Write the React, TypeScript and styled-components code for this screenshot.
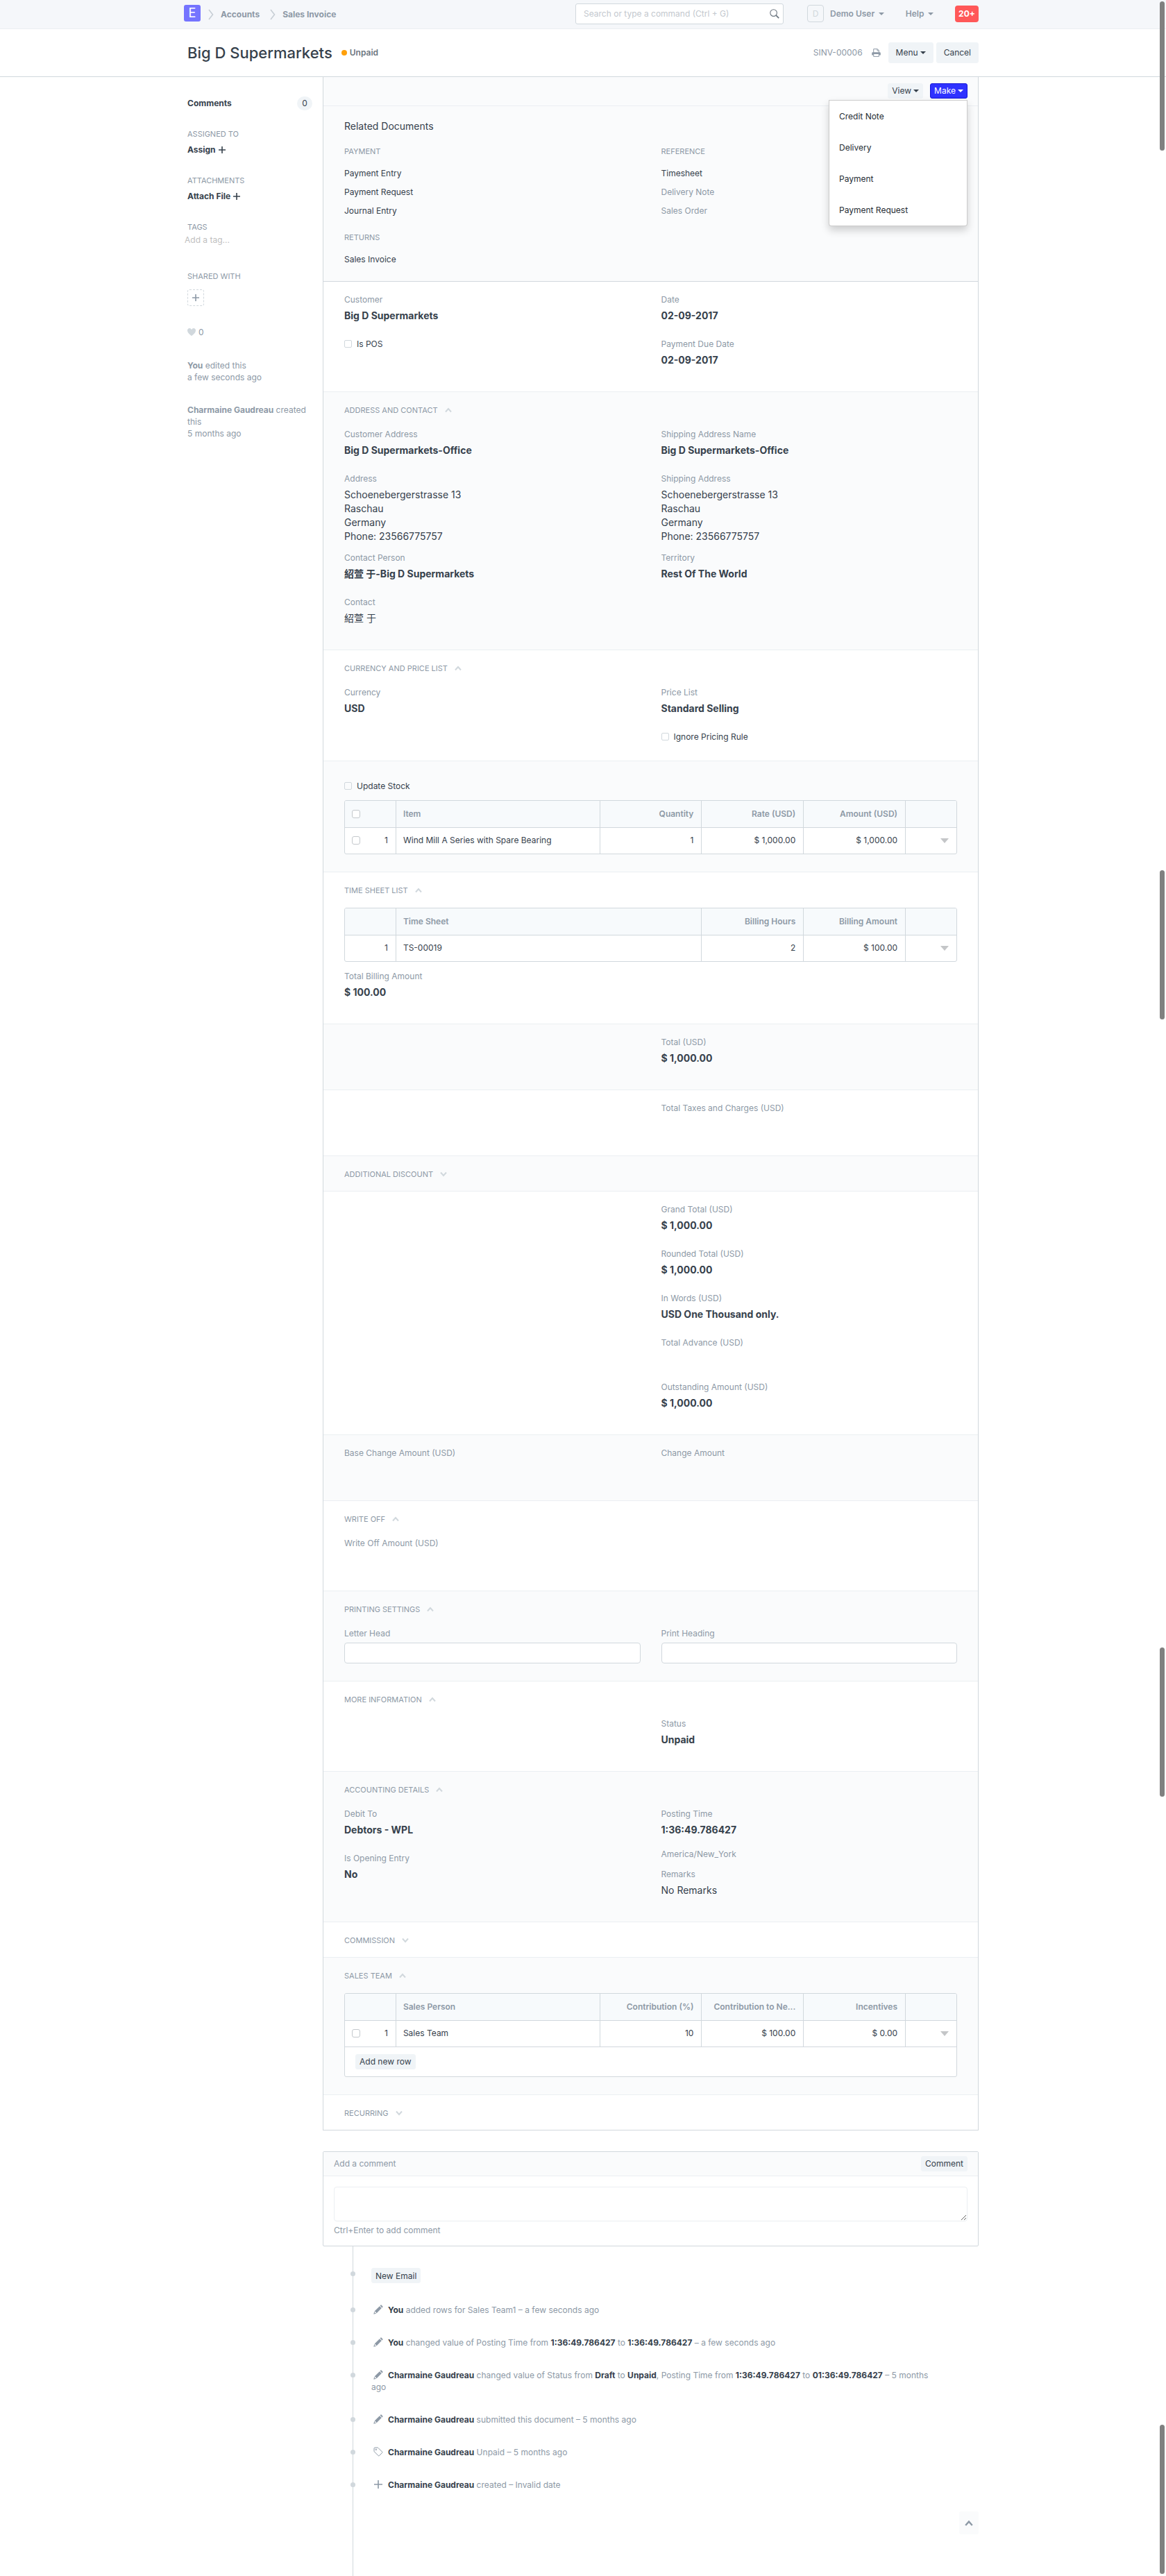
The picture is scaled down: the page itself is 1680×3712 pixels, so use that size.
import React from "react";
import styled, { createGlobalStyle, css } from "styled-components";

const c = {
  text: "#36414c",
  muted: "#8d99a6",
  border: "#d1d8dd",
  light: "#ebeff2",
  shade: "#fafbfc",
  nav: "#f5f7fa",
  head: "#f7fafc",
  btn: "#f0f4f7",
};

const Global = createGlobalStyle`
  *, *::before, *::after { box-sizing: border-box; }
  body {
    margin: 0;
    background: #fff;
    color: ${c.text};
    font: 400 12px/18px Inter, "Noto Sans CJK TC", "Liberation Sans", sans-serif;
  }
  button, input, textarea { font: inherit; color: inherit; }
  a { color: inherit; text-decoration: none; }
  b { font-weight: 700; }
  h1, h2, h3, p, ul, ol { margin: 0; padding: 0; font: inherit; list-style: none; }
`;

const Page = styled.div`
  position: relative;
  min-height: 100vh;
`;

const Container = styled.div`
  max-width: 1170px;
  margin: 0 auto;
  padding: 0 15px;
  display: flex;
  align-items: center;
`;

/* ---------- top bar ---------- */

const Navbar = styled.nav`
  background: ${c.nav};
  border-bottom: 1px solid ${c.light};
  ${Container} {
    height: 41px;
  }
`;

const Crumbs = styled.ol`
  display: flex;
  align-items: center;
  flex: 1;
  margin-left: -5px;
  color: ${c.muted};
  font-weight: 700;
  li {
    display: flex;
    align-items: center;
  }
  svg {
    margin: 0 10px 0 11px;
  }
  li:last-child svg {
    margin-left: 15px;
  }
`;

const Logo = styled.a`
  display: grid;
  place-items: center;
  width: 24px;
  height: 24px;
  margin-top: -3px;
  border-radius: 3px;
  background: #7574ff;
  color: #fff;
  font-size: 18px;
  font-weight: 400;
`;

const Search = styled.label`
  display: flex;
  align-items: center;
  width: 300px;
  height: 30px;
  margin-bottom: 1px;
  padding: 0 5px 0 11px;
  border: 1px solid ${c.border};
  border-radius: 3px;
  background: #fff;
  input {
    flex: 1;
    min-width: 0;
    padding: 0;
    border: 0;
    outline: 0;
    background: none;
  }
  input::placeholder {
    color: #c3c8ce;
    opacity: 1;
  }
`;

const NavTools = styled.div`
  display: flex;
  align-items: center;
  justify-content: space-between;
  width: 247px;
  margin-left: 34px;
  padding-bottom: 2px;
`;

const NavButton = styled.button`
  display: flex;
  align-items: center;
  gap: 6px;
  padding: 0;
  border: 0;
  background: none;
  color: ${c.muted};
  font-weight: 600;
`;

const Avatar = styled.span`
  display: grid;
  place-items: center;
  width: 24px;
  height: 25px;
  margin-right: 3px;
  border: 1px solid ${c.border};
  border-radius: 4px;
  color: ${c.border};
  font-weight: 400;
`;

const Count = styled.button`
  width: 34px;
  height: 24px;
  padding: 0;
  border: 0;
  border-radius: 4px;
  background: #ff5858;
  color: #fff;
  font-weight: 700;
`;

const Caret = styled.span`
  display: inline-block;
  border: 4px solid transparent;
  border-top-color: currentColor;
  border-bottom: 0;
`;

/* ---------- document header ---------- */

const DocHead = styled.header`
  border-bottom: 1px solid ${c.border};
  ${Container} {
    height: 68px;
    gap: 4px;
  }
`;

const Title = styled.h1`
  font-size: 22px;
  line-height: 30px;
  font-weight: 500;
`;

const Status = styled.span`
  display: flex;
  align-items: center;
  flex: 1;
  gap: 4px;
  margin-left: 9px;
  color: #6c7680;
  font-weight: 600;
  &::before {
    content: "";
    width: 8px;
    height: 8px;
    border-radius: 50%;
    background: #ffa00a;
  }
`;

const DocName = styled.span`
  margin-right: 9px;
  color: ${c.muted};
`;

const IconButton = styled.button`
  display: flex;
  margin-right: 7px;
  padding: 0;
  border: 0;
  background: none;
  color: ${c.muted};
`;

const Button = styled.button<{ $large?: boolean; $primary?: boolean }>`
  display: inline-flex;
  align-items: center;
  gap: 3px;
  height: ${(p) => (p.$large ? 30 : 22)}px;
  padding: 0 ${(p) => (p.$large ? 10 : 5)}px;
  border: 1px solid ${(p) => (p.$primary ? "#1516d8" : c.btn)};
  border-radius: 3px;
  background: ${(p) => (p.$primary ? "#2f32ff" : c.btn)};
  color: ${(p) => (p.$primary ? "#fff" : c.text)};
`;

/* ---------- body ---------- */

const Body = styled.div`
  max-width: 1170px;
  margin: 0 auto;
  padding: 0 15px;
  display: grid;
  grid-template-columns: 195px minmax(0, 1fr);
`;

const Sidebar = styled.aside`
  padding: 29px 15px 0 0;
`;

const SideGroup = styled.section`
  margin-bottom: 26px;
`;

const SideLabel = styled.h3`
  color: ${c.muted};
  font-size: 11px;
`;

const SideAction = styled.button`
  display: flex;
  align-items: center;
  gap: 4px;
  margin-top: 5px;
  padding: 0;
  border: 0;
  background: none;
  font-weight: 700;
`;

const Comments = styled.div`
  display: flex;
  align-items: center;
  justify-content: space-between;
  height: 18px;
  font-weight: 700;
  span {
    width: 22px;
    border-radius: 10px;
    background: ${c.btn};
    line-height: 20px;
    text-align: center;
    font-weight: 400;
  }
`;

const TagInput = styled.input`
  display: block;
  width: 100%;
  height: 18px;
  margin: 1px 0 34px -4px;
  padding: 0;
  border: 0;
  outline: 0;
  &::placeholder {
    color: #c0c0c0;
    opacity: 1;
  }
`;

const ShareButton = styled.button`
  display: grid;
  place-items: center;
  width: 24px;
  height: 24px;
  margin: 10px 0 29px;
  padding: 0;
  border: 1px dashed ${c.border};
  border-radius: 3px;
  background: none;
  color: ${c.muted};
`;

const Likes = styled.div`
  display: flex;
  align-items: center;
  gap: 4px;
  color: ${c.muted};
  svg {
    color: ${c.border};
  }
`;

const History = styled.p`
  margin: 30px 0 0;
  color: ${c.muted};
  line-height: 17px;
`;

const Panel = styled.div`
  border: 1px solid ${c.border};
  border-top: 0;
`;

const Toolbar = styled.div`
  display: flex;
  justify-content: flex-end;
  gap: 10px;
  height: 42px;
  padding: 9px 15px 0;
  border-bottom: 1px solid ${c.light};
  background: ${c.shade};
`;

const MenuAnchor = styled.div`
  position: relative;
`;

const Menu = styled.ul`
  position: absolute;
  z-index: 2;
  top: 24px;
  right: 0;
  width: 200px;
  border: 1px solid rgba(0, 0, 0, 0.2);
  border-radius: 0 0 4px 4px;
  background: #fff;
  box-shadow: 0 6px 12px rgba(0, 0, 0, 0.18);
  a {
    display: block;
    padding: 0 14px;
    line-height: 45px;
    color: #262d34;
  }
`;

const Related = styled.section`
  padding: 20px 30px 22px;
  border-bottom: 1px solid ${c.border};
  background: ${c.shade};
  h2 {
    font-size: 14px;
    margin-bottom: 18px;
  }
`;

const Columns = styled.div`
  display: grid;
  grid-template-columns: 1fr 1fr;
  gap: 30px;
`;

const Caps = styled.h3`
  color: ${c.muted};
  font-size: 11px;
  text-transform: uppercase;
`;

const Links = styled.ul`
  display: grid;
  gap: 9px;
  margin: 14px 0 20px;
  &:last-child {
    margin-bottom: 0;
  }
`;

const DocLink = styled.a<{ $muted?: boolean }>`
  color: ${(p) => (p.$muted ? c.muted : c.text)};
`;

const Section = styled.section<{ $shade?: boolean }>`
  padding: 17px 30px 13px;
  background: ${(p) => (p.$shade ? c.shade : "#fff")};
  & + & {
    border-top: 1px solid ${c.light};
  }
`;

const Toggle = styled.button<{ $space: number }>`
  display: flex;
  align-items: center;
  gap: 10px;
  height: 18px;
  margin: 0 0 ${(p) => p.$space}px;
  padding: 0;
  border: 0;
  background: none;
  color: ${c.muted};
  font-size: 11px;
  text-transform: uppercase;
  svg {
    color: ${c.border};
  }
`;

const FieldBox = styled.div`
  min-height: 64px;
`;

const FieldLabel = styled.label`
  display: block;
  color: ${c.muted};
`;

const Value = styled.div<{ $plain?: boolean }>`
  margin: 4px 0 12px;
  font-size: 14px;
  line-height: 20px;
  font-weight: ${(p) => (p.$plain ? 400 : 700)};
`;

const Note = styled.p`
  margin: 16px 0 11px;
  color: ${c.muted};
`;

const box = css`
  appearance: none;
  flex: none;
  margin: 0;
  border: 1px solid ${c.border};
  border-radius: 2px;
  background: #fff;
`;

const Check = styled.label`
  display: flex;
  align-items: center;
  gap: 7px;
  height: 18px;
  input {
    ${box}
    width: 11px;
    height: 11px;
    background: none;
    margin-bottom: 2px;
  }
`;

const StockCheck = styled(Check)`
  margin: 10px 0 11px;
`;

const PlainCheck = styled(Check)`
  margin-bottom: 12px;
`;

const TextInput = styled.input`
  display: block;
  width: 100%;
  height: 30px;
  margin: 4px 0 12px;
  padding: 0 10px;
  border: 1px solid ${c.border};
  border-radius: 4px;
  background: #fff;
`;

const GridBox = styled.div`
  margin-bottom: 12px;
  border: 1px solid ${c.border};
  border-radius: 3px;
  background: #fff;
  overflow: hidden;
`;

const Grid = styled.table`
  width: 100%;
  table-layout: fixed;
  border-collapse: collapse;
  th,
  td {
    height: 38px;
    padding: 0 11px 0 10px;
    border-right: 1px solid ${c.border};
    text-align: right;
    overflow: hidden;
    white-space: nowrap;
    text-overflow: ellipsis;
  }
  th {
    background: ${c.head};
    border-bottom: 1px solid ${c.border};
    color: ${c.muted};
    font-weight: 600;
  }
  th:nth-child(2),
  td:nth-child(2) {
    text-align: left;
  }
  th:last-child,
  td:last-child {
    border-right: 0;
  }
`;

const RowHead = styled.div`
  display: flex;
  align-items: center;
  justify-content: space-between;
  input {
    ${box}
    width: 12px;
    height: 12px;
    border-color: #c4c8cc;
    border-radius: 3px;
  }
  span {
    margin-left: auto;
  }
`;

const RowMenu = styled.button`
  padding: 0;
  border: 0;
  background: none;
  color: #c4c6c8;
  line-height: 0;
`;

const GridFoot = styled.div`
  padding: 10px 15px;
  border-top: 1px solid ${c.border};
`;

/* ---------- comments and activity ---------- */

const CommentBox = styled.section`
  margin-top: 30px;
  border: 1px solid ${c.border};
  border-radius: 2px;
`;

const CommentHead = styled.div`
  display: flex;
  align-items: center;
  justify-content: space-between;
  height: 35px;
  padding: 0 15px;
  border-bottom: 1px solid ${c.light};
  background: ${c.shade};
  color: ${c.muted};
`;

const CommentBody = styled.div`
  padding: 15px 15px 13px;
  color: ${c.muted};
  textarea {
    display: block;
    width: 100%;
    height: 50px;
    margin-bottom: 4px;
    padding: 8px 10px;
    border: 1px solid ${c.light};
    border-radius: 4px;
    resize: vertical;
  }
`;

const Timeline = styled.div`
  margin-left: 43px;
  padding: 31px 0 60px 26px;
  border-left: 1px solid ${c.border};
  color: ${c.muted};
  line-height: 17px;
`;

const Event = styled.div`
  position: relative;
  margin: 0 55px 30px 0;
  &::before {
    content: "";
    position: absolute;
    top: 5px;
    left: -30px;
    width: 7px;
    height: 7px;
    border-radius: 50%;
    background: ${c.border};
  }
  b {
    color: ${c.text};
  }
  svg {
    margin: 0 7px 0 3px;
    vertical-align: -2px;
  }
`;

const ToTop = styled.button`
  display: grid;
  place-items: center;
  width: 28px;
  height: 33px;
  margin: 0 0 0 auto;
  padding: 0;
  border: 0;
  border-radius: 3px;
  background: ${c.shade};
  color: ${c.muted};
`;

/* Scroll thumbs lie over the right edge of the page. */
const Thumbs = styled.div`
  position: absolute;
  top: 2px;
  right: 2px;
  width: 7px;
  display: grid;
  gap: 905px;
  pointer-events: none;
  i {
    height: 215px;
    border-radius: 4px;
    background: #808080;
  }
  i:first-child {
    margin-bottom: 132px;
  }
`;

/* ---------- icons ---------- */

const Crumb = () => (
  <svg width="8" height="16" viewBox="0 0 8 16" fill="none" stroke="#c7ced5" strokeWidth="1.6">
    <path d="M1 1l5.5 7L1 15" />
  </svg>
);

const Chevron = ({ down = false, size = 10, width = 2 }) => (
  <svg width={size} height={size} viewBox="0 0 10 10" fill="none" stroke="currentColor" strokeWidth={width}>
    <path d={down ? "M1 2.5l4 4.5 4-4.5" : "M1 7.5L5 3l4 4.5"} />
  </svg>
);

const SearchIcon = () => (
  <svg width="14" height="14" viewBox="0 0 14 14" fill="none" stroke="#6c7680" strokeWidth="1.1">
    <circle cx="5.6" cy="5.6" r="4.8" />
    <path d="M9.2 9.2l4 4" strokeWidth="1.8" />
  </svg>
);

const PrintIcon = () => (
  <svg width="13" height="12" viewBox="0 0 13 12" fill="none" stroke="currentColor">
    <path d="M2.7 6V.6h5.6l2 2V6M8 .8v2.2h2.2" />
    <path d="M.2 9.4V6.6Q.2 5.2 1.6 5.2h9.8q1.4 0 1.4 1.4v2.8h-2.3V8H2.5v1.4z" fill="currentColor" stroke="none" />
    <path d="M2.7 8v3.4h7.6V8" />
  </svg>
);

const Plus = ({ size = 10, width = 1.6 }) => (
  <svg width={size} height={size} viewBox="0 0 10 10" fill="none" stroke="currentColor" strokeWidth={width}>
    <path d="M5 0v10M0 5h10" />
  </svg>
);

const PlusThin = () => (
  <svg width="14" height="14" viewBox="0 0 14 14" fill="none" stroke="currentColor" strokeWidth="1.6">
    <path d="M7 1v12M1 7h12" />
  </svg>
);

const Heart = () => (
  <svg width="12" height="16" viewBox="0 0 12 16" fill="currentColor">
    <path d="M11.2 3c-.52-.63-1.25-.95-2.2-1-.97 0-1.69.42-2.2 1-.51.58-.78.92-.8 1-.02-.08-.28-.42-.8-1-.52-.58-1.17-1-2.2-1-.95.05-1.69.38-2.2 1-.52.61-.78 1.28-.8 2 0 .52.09 1.52.67 2.67C1.25 8.82 3.01 10.61 6 13c2.98-2.39 4.77-4.17 5.34-5.33C11.91 6.51 12 5.5 12 5c-.02-.72-.28-1.39-.8-2.02V3z" />
  </svg>
);

const Pencil = () => (
  <svg width="14" height="14" viewBox="0 0 14 14" fill="currentColor">
    <path d="M8.9 2.2L11.8 5.1 4.7 12.2 1.8 9.3Z" />
    <path d="M9.6 1.5L10.5 0.6Q11 0.1 11.5 0.6L13.4 2.5Q13.9 3 13.4 3.5L12.5 4.4Z" />
    <path d="M1.3 9.8L0.3 13.7L4.2 12.7L3.5 12L1.7 12.3L2 10.5Z" />
  </svg>
);

const Tag = () => (
  <svg width="14" height="14" viewBox="0 0 14 14" fill="none" stroke="currentColor" strokeLinejoin="round">
    <path d="M1 2.2Q1 1 2.2 1L5.8 1Q6.5 1 7 1.5L12.7 7.2Q13.3 7.8 12.7 8.4L8.4 12.7Q7.8 13.3 7.2 12.7L1.5 7Q1 6.5 1 5.8Z" />
    <circle cx="3.8" cy="3.8" r=".8" />
  </svg>
);

const Triangle = () => (
  <svg width="12" height="7" viewBox="0 0 12 7" fill="currentColor">
    <path d="M0 0h12L6 7z" />
  </svg>
);

/* ---------- parts ---------- */

const Field = ({ label, children, plain }: { label: string; children?: React.ReactNode; plain?: boolean }) => (
  <FieldBox>
    <FieldLabel as="div">{label}</FieldLabel>
    {children && <Value $plain={plain}>{children}</Value>}
  </FieldBox>
);

const InputField = ({ id, label }: { id: string; label: string }) => (
  <div>
    <FieldLabel htmlFor={id}>{label}</FieldLabel>
    <TextInput id={id} />
  </div>
);

const Heading = ({ children, closed, grid }: { children: string; closed?: boolean; grid?: boolean }) => (
  <Toggle $space={closed ? 2 : grid ? 16 : 17} aria-expanded={!closed}>
    {children}
    <Chevron down={closed} />
  </Toggle>
);

type Col = { title: string; span: number; value: string };

const DataGrid = ({
  cols,
  checkAll,
  check,
  children,
}: {
  cols: Col[];
  checkAll?: boolean;
  check?: boolean;
  children?: React.ReactNode;
}) => (
  <GridBox>
    <Grid>
      <colgroup>
        {[1, ...cols.map((k) => k.span), 1].map((n, i) => (
          <col key={i} style={{ width: `${(n / 12) * 100}%` }} />
        ))}
      </colgroup>
      <thead>
        <tr>
          <th>
            <RowHead>{checkAll && <input type="checkbox" aria-label="Select all rows" />}</RowHead>
          </th>
          {cols.map((k) => (
            <th key={k.title}>{k.title}</th>
          ))}
          <th />
        </tr>
      </thead>
      <tbody>
        <tr>
          <td>
            <RowHead>
              {check && <input type="checkbox" aria-label="Select row 1" />}
              <span>1</span>
            </RowHead>
          </td>
          {cols.map((k) => (
            <td key={k.title}>{k.value}</td>
          ))}
          <td>
            <RowMenu aria-label="Open row">
              <Triangle />
            </RowMenu>
          </td>
        </tr>
      </tbody>
    </Grid>
    {children}
  </GridBox>
);

const Address = () => (
  <>
    Schoenebergerstrasse 13
    <br />
    Raschau
    <br />
    Germany
    <br />
    Phone: 23566775757
  </>
);

export default function App() {
  return (
    <Page>
      <Global />
      <Navbar>
        <Container>
          <Crumbs>
            <li>
              <Logo href="#">E</Logo>
            </li>
            <li>
              <Crumb />
              <a href="#">Accounts</a>
            </li>
            <li>
              <Crumb />
              <a href="#">Sales Invoice</a>
            </li>
          </Crumbs>
          <Search>
            <input type="text" aria-label="Search" placeholder="Search or type a command (Ctrl + G)" />
            <SearchIcon />
          </Search>
          <NavTools>
            <NavButton>
              <Avatar>D</Avatar>
              Demo User
              <Caret />
            </NavButton>
            <NavButton>
              Help
              <Caret />
            </NavButton>
            <Count>20+</Count>
          </NavTools>
        </Container>
      </Navbar>

      <DocHead>
        <Container>
          <Title>Big D Supermarkets</Title>
          <Status>Unpaid</Status>
          <DocName>SINV-00006</DocName>
          <IconButton aria-label="Print">
            <PrintIcon />
          </IconButton>
          <Button $large>
            Menu
            <Caret />
          </Button>
          <Button $large>Cancel</Button>
        </Container>
      </DocHead>

      <Body>
        <Sidebar>
          <SideGroup>
            <Comments>
              Comments <span>0</span>
            </Comments>
          </SideGroup>
          <SideGroup>
            <SideLabel>ASSIGNED TO</SideLabel>
            <SideAction>
              Assign <Plus />
            </SideAction>
          </SideGroup>
          <SideGroup>
            <SideLabel>ATTACHMENTS</SideLabel>
            <SideAction>
              Attach File <Plus />
            </SideAction>
          </SideGroup>
          <SideLabel>TAGS</SideLabel>
          <TagInput aria-label="Tags" placeholder="Add a tag..." />
          <SideLabel>SHARED WITH</SideLabel>
          <ShareButton aria-label="Share">
            <Plus />
          </ShareButton>
          <Likes>
            <Heart />0
          </Likes>
          <History>
            <b>You</b> edited this
            <br />a few seconds ago
          </History>
          <History>
            <b>Charmaine Gaudreau</b> created
            <br />
            this
            <br />5 months ago
          </History>
        </Sidebar>

        <main>
          <Panel>
            <Toolbar>
              <Button>
                View
                <Caret />
              </Button>
              <MenuAnchor>
                <Button $primary aria-expanded>
                  Make
                  <Caret />
                </Button>
                <Menu>
                  {["Credit Note", "Delivery", "Payment", "Payment Request"].map((t) => (
                    <li key={t}>
                      <a href="#">{t}</a>
                    </li>
                  ))}
                </Menu>
              </MenuAnchor>
            </Toolbar>

            <Related>
              <h2>Related Documents</h2>
              <Columns>
                <div>
                  <Caps>Payment</Caps>
                  <Links as="div">
                    <DocLink href="#">Payment Entry</DocLink>
                    <DocLink href="#">Payment Request</DocLink>
                    <DocLink href="#">Journal Entry</DocLink>
                  </Links>
                  <Caps>Returns</Caps>
                  <Links as="div">
                    <DocLink href="#">Sales Invoice</DocLink>
                  </Links>
                </div>
                <div>
                  <Caps>Reference</Caps>
                  <Links as="div">
                    <DocLink href="#">Timesheet</DocLink>
                    <DocLink $muted href="#">
                      Delivery Note
                    </DocLink>
                    <DocLink $muted href="#">
                      Sales Order
                    </DocLink>
                  </Links>
                </div>
              </Columns>
            </Related>

            <Section>
              <Columns>
                <div>
                  <Field label="Customer">Big D Supermarkets</Field>
                  <Check>
                    <input type="checkbox" />
                    Is POS
                  </Check>
                </div>
                <div>
                  <Field label="Date">02-09-2017</Field>
                  <Field label="Payment Due Date">02-09-2017</Field>
                </div>
              </Columns>
            </Section>

            <Section $shade>
              <Heading>Address and Contact</Heading>
              <Columns>
                <div>
                  <Field label="Customer Address">Big D Supermarkets-Office</Field>
                  <Field label="Address" plain>
                    <Address />
                  </Field>
                  <Field label="Contact Person">紹萱 于-Big D Supermarkets</Field>
                  <Field label="Contact" plain>
                    紹萱 于
                  </Field>
                </div>
                <div>
                  <Field label="Shipping Address Name">Big D Supermarkets-Office</Field>
                  <Field label="Shipping Address" plain>
                    <Address />
                  </Field>
                  <Field label="Territory">Rest Of The World</Field>
                </div>
              </Columns>
            </Section>

            <Section>
              <Heading>Currency and Price List</Heading>
              <Columns>
                <Field label="Currency">USD</Field>
                <div>
                  <Field label="Price List">Standard Selling</Field>
                  <PlainCheck>
                    <input type="checkbox" />
                    Ignore Pricing Rule
                  </PlainCheck>
                </div>
              </Columns>
            </Section>

            <Section $shade>
              <StockCheck>
                <input type="checkbox" />
                Update Stock
              </StockCheck>
              <DataGrid
                checkAll
                check
                cols={[
                  { title: "Item", span: 4, value: "Wind Mill A Series with Spare Bearing" },
                  { title: "Quantity", span: 2, value: "1" },
                  { title: "Rate (USD)", span: 2, value: "$ 1,000.00" },
                  { title: "Amount (USD)", span: 2, value: "$ 1,000.00" },
                ]}
              />
            </Section>

            <Section>
              <Heading grid>Time Sheet List</Heading>
              <DataGrid
                cols={[
                  { title: "Time Sheet", span: 6, value: "TS-00019" },
                  { title: "Billing Hours", span: 2, value: "2" },
                  { title: "Billing Amount", span: 2, value: "$ 100.00" },
                ]}
              />
              <Field label="Total Billing Amount">$ 100.00</Field>
            </Section>

            <Section $shade>
              <Columns>
                <div />
                <Field label="Total (USD)">$ 1,000.00</Field>
              </Columns>
            </Section>

            <Section>
              <Columns>
                <div />
                <Field label="Total Taxes and Charges (USD)" />
              </Columns>
            </Section>

            <Section $shade>
              <Heading closed>Additional Discount</Heading>
            </Section>

            <Section>
              <Columns>
                <div />
                <div>
                  <Field label="Grand Total (USD)">$ 1,000.00</Field>
                  <Field label="Rounded Total (USD)">$ 1,000.00</Field>
                  <Field label="In Words (USD)">USD One Thousand only.</Field>
                  <Field label="Total Advance (USD)" />
                  <Field label="Outstanding Amount (USD)">$ 1,000.00</Field>
                </div>
              </Columns>
            </Section>

            <Section $shade>
              <Columns>
                <Field label="Base Change Amount (USD)" />
                <Field label="Change Amount" />
              </Columns>
            </Section>

            <Section>
              <Heading>Write Off</Heading>
              <Field label="Write Off Amount (USD)" />
            </Section>

            <Section $shade>
              <Heading>Printing Settings</Heading>
              <Columns>
                <InputField id="letter-head" label="Letter Head" />
                <InputField id="print-heading" label="Print Heading" />
              </Columns>
            </Section>

            <Section>
              <Heading>More Information</Heading>
              <Columns>
                <div />
                <Field label="Status">Unpaid</Field>
              </Columns>
            </Section>

            <Section $shade>
              <Heading>Accounting Details</Heading>
              <Columns>
                <div>
                  <Field label="Debit To">Debtors - WPL</Field>
                  <Field label="Is Opening Entry">No</Field>
                </div>
                <div>
                  <FieldLabel as="div">Posting Time</FieldLabel>
                  <Value>1:36:49.786427</Value>
                  <Note>America/New_York</Note>
                  <Field label="Remarks" plain>
                    No Remarks
                  </Field>
                </div>
              </Columns>
            </Section>

            <Section>
              <Heading closed>Commission</Heading>
            </Section>

            <Section $shade>
              <Heading grid>Sales Team</Heading>
              <DataGrid
                check
                cols={[
                  { title: "Sales Person", span: 4, value: "Sales Team" },
                  { title: "Contribution (%)", span: 2, value: "10" },
                  { title: "Contribution to Ne...", span: 2, value: "$ 100.00" },
                  { title: "Incentives", span: 2, value: "$ 0.00" },
                ]}
              >
                <GridFoot>
                  <Button>Add new row</Button>
                </GridFoot>
              </DataGrid>
            </Section>

            <Section>
              <Heading closed>Recurring</Heading>
            </Section>
          </Panel>

          <CommentBox>
            <CommentHead>
              <label htmlFor="comment">Add a comment</label>
              <Button>Comment</Button>
            </CommentHead>
            <CommentBody>
              <textarea id="comment" />
              Ctrl+Enter to add comment
            </CommentBody>
          </CommentBox>

          <Timeline>
            <Event>
              <Button>New Email</Button>
            </Event>
            <Event>
              <Pencil />
              <b>You</b> added rows for Sales Team1 – a few seconds ago
            </Event>
            <Event>
              <Pencil />
              <b>You</b> changed value of Posting Time from <b>1:36:49.786427</b> to <b>1:36:49.786427</b> – a few
              seconds ago
            </Event>
            <Event>
              <Pencil />
              <b>Charmaine Gaudreau</b> changed value of Status from <b>Draft</b> to <b>Unpaid</b>, Posting Time from{" "}
              <b>1:36:49.786427</b> to <b>01:36:49.786427</b> – 5 months ago
            </Event>
            <Event>
              <Pencil />
              <b>Charmaine Gaudreau</b> submitted this document – 5 months ago
            </Event>
            <Event>
              <Tag />
              <b>Charmaine Gaudreau</b> Unpaid – 5 months ago
            </Event>
            <Event>
              <PlusThin />
              <b>Charmaine Gaudreau</b> created – Invalid date
            </Event>
            <ToTop aria-label="Back to top">
              <Chevron size={12} />
            </ToTop>
          </Timeline>
        </main>
      </Body>
      <Thumbs>
        <i />
        <i />
        <i />
        <i />
      </Thumbs>
    </Page>
  );
}
